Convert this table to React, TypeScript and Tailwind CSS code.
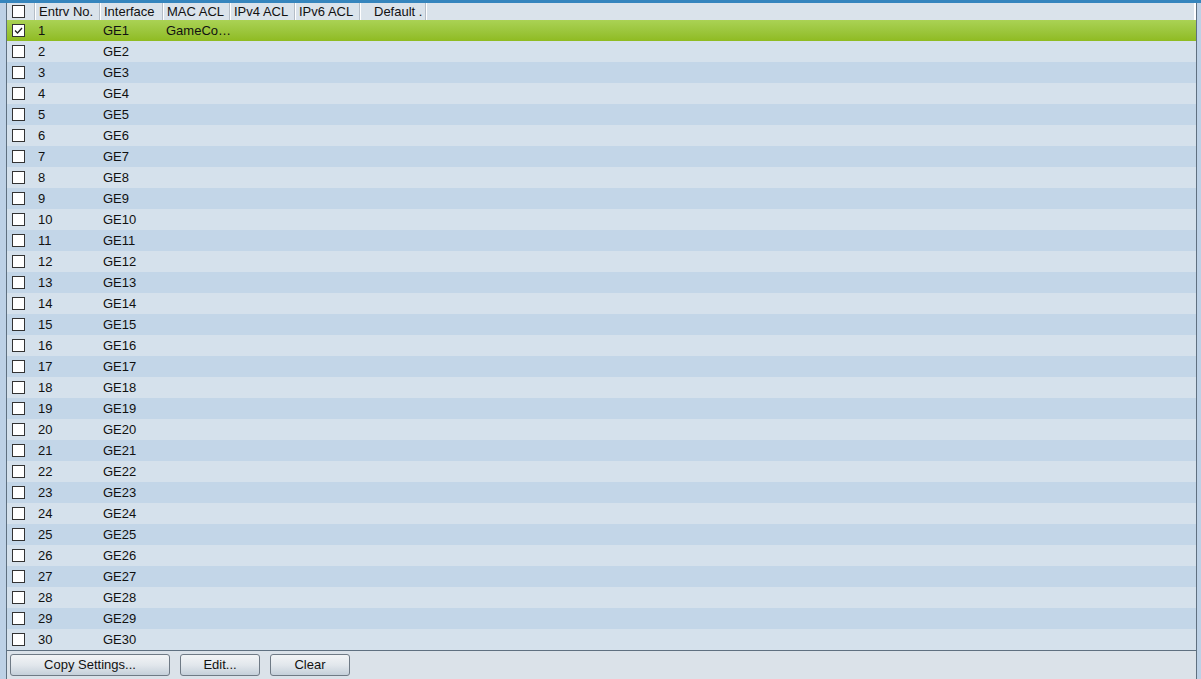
import React from 'react';

const cols = 'grid grid-cols-[28px_65px_63px_67px_65px_65px_66px_1fr]';

const headers = ['Entrv No.', 'Interface', 'MAC ACL', 'IPv4 ACL', 'IPv6 ACL', 'Default .'];

const rows = Array.from({ length: 30 }, (_, i) => ({
  no: i + 1,
  iface: `GE${i + 1}`,
  mac: i === 0 ? 'GameCo…' : '',
}));

function Box({ checked }: { checked?: boolean }) {
  return (
    <span className="flex h-[13px] w-[13px] items-center justify-center border border-[#333] bg-white">
      {checked && (
        <svg width="9" height="9" viewBox="0 0 9 9">
          <path d="M1 4.5 L3.5 7 L8 2" fill="none" stroke="#222" strokeWidth="1.3" />
        </svg>
      )}
    </span>
  );
}

function Btn({ label, w }: { label: string; w: string }) {
  return (
    <button
      className={`${w} h-[22px] rounded-[3px] border border-[#6f7a85] bg-gradient-to-b from-[#f2f4f6] via-[#e2e7ec] to-[#c5d0da] text-[13px] leading-[18px] text-[#111]`}
    >
      {label}
    </button>
  );
}

export default function App() {
  return (
    <div className="flex h-[679px] w-[1201px] flex-col bg-[#bdd1e6] font-['Liberation_Sans',Arial,sans-serif] text-[13px] text-[#111]">
      <div className="h-[3px] bg-[#3585bd]" />
      <div className="ml-[6px] mr-[4px] flex flex-1 flex-col border-l border-r border-[#5f7080] bg-[#dbe2e9]">
        <div className={`${cols} h-[17px] bg-[#dae3eb] leading-[17px]`}>
          <div className="flex items-center border-r border-[#b4bdc7] pl-[5px] shadow-[1px_0_0_#fff]">
            <Box />
          </div>
          {headers.map((h, i) => (
            <div
              key={h}
              className={`border-r border-[#b4bdc7] shadow-[1px_0_0_#fff] ${i === 5 ? 'pl-[14px]' : 'pl-[4px]'} whitespace-nowrap`}
            >
              {h}
            </div>
          ))}
          <div className="border-r-2 border-white" />
        </div>
        {rows.map((r, i) => (
          <div
            key={r.no}
            className={`${cols} h-[21px] items-center ${
              i === 0
                ? 'bg-gradient-to-b from-[#aad254] to-[#8fbb20]'
                : i % 2 === 1
                  ? 'bg-[#d5e1ec]'
                  : 'bg-[#c3d6e8]'
            }`}
          >
            <div className="flex items-center pl-[5px]">
              <Box checked={i === 0} />
            </div>
            <div className="pl-[3px]">{r.no}</div>
            <div className="pl-[3px]">{r.iface}</div>
            <div className="whitespace-nowrap pl-[3px]">{r.mac}</div>
          </div>
        ))}
        <div className="flex gap-[10px] border-t border-[#5f7080] pl-[3px] pt-[3px]">
          <Btn label="Copy Settings..." w="w-[160px]" />
          <Btn label="Edit..." w="w-[80px]" />
          <Btn label="Clear" w="w-[80px]" />
        </div>
      </div>
    </div>
  );
}
